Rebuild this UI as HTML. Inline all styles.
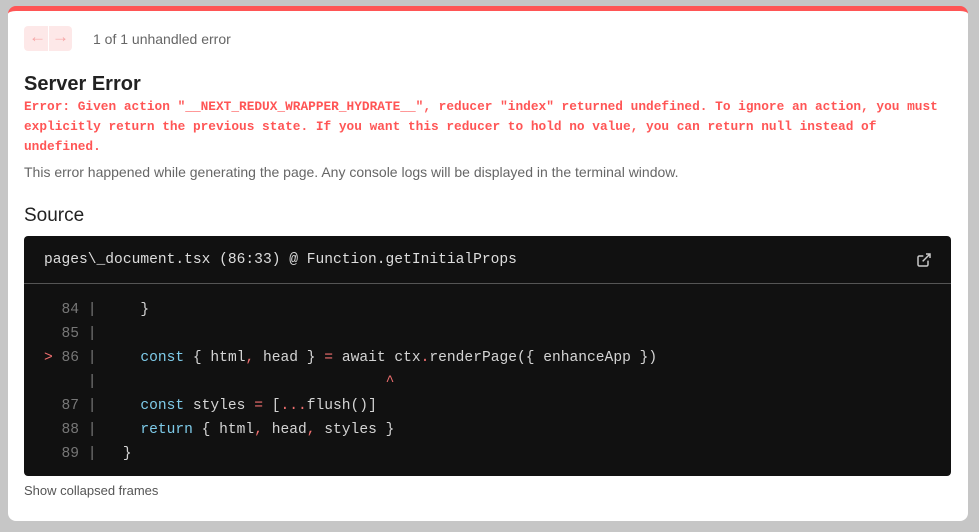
<!DOCTYPE html>
<html><head><style>
*{margin:0;padding:0;box-sizing:border-box}
body{width:979px;height:532px;background:#c6c6c6;position:relative;overflow:hidden;font-family:"Liberation Sans",sans-serif}
.d{position:absolute;left:8px;top:6px;width:960px;height:515px;background:#fff;border-radius:8px;border-top:5px solid #ff5555;overflow:hidden}
.a{position:absolute}
.mono{font-family:"Liberation Mono",monospace}
.nav{left:16px;top:15px;width:48px;height:25px;background:#fde8e8;border-radius:4px}
.nav span{position:absolute;top:1px;color:#f7a6a6;font-size:17px}
.code{left:16px;top:225px;width:927px;height:240px;background:#111;border-radius:4px;color:#ddd}
pre{font-family:"Liberation Mono",monospace;font-size:14.6px;line-height:24px;position:absolute;left:20px;top:62px;color:#d4d4d4}
.g{color:#777}.b{color:#7ecbe9}.r{color:#f06f6f}
</style></head><body>
<div class="d">
<div class="a nav"><span style="left:5px">&#8592;</span><span style="left:28px">&#8594;</span><div style="position:absolute;left:24px;top:0;width:1px;height:25px;background:#fff"></div></div>
<div class="a" style="left:85px;top:20px;font-size:14px;color:#666">1 of 1 unhandled error</div>
<div class="a" style="left:16px;top:62px;font-size:20px;font-weight:bold;color:#222">Server Error</div>
<div class="a mono" style="left:16px;top:86px;width:930px;font-size:12.8px;line-height:20px;font-weight:bold;color:#ff5555">Error: Given action "__NEXT_REDUX_WRAPPER_HYDRATE__", reducer "index" returned undefined. To ignore an action, you must explicitly return the previous state. If you want this reducer to hold no value, you can return null instead of undefined.</div>
<div class="a" style="left:16px;top:153px;font-size:14px;color:#666">This error happened while generating the page. Any console logs will be displayed in the terminal window.</div>
<div class="a" style="left:16px;top:194px;font-size:19px;color:#222">Source</div>
<div class="a code">
<div class="a mono" style="left:20px;top:16px;font-size:14.6px;color:#ddd">pages\_document.tsx (86:33) @ Function.getInitialProps</div>
<svg class="a" style="left:892px;top:16px" width="16" height="16" viewBox="0 0 24 24" fill="none" stroke="#ccc" stroke-width="2.2"><path d="M18 13v6a2 2 0 0 1-2 2H5a2 2 0 0 1-2-2V8a2 2 0 0 1 2-2h6"/><path d="M15 3h6v6"/><path d="M10 14L21 3"/></svg>
<div class="a" style="left:0;top:47px;width:927px;height:1px;background:#555"></div>
<pre><span class="g">  84 |</span>     }
<span class="g">  85 |</span>
<span class="r">&gt;</span><span class="g"> 86 |</span>     <span class="b">const</span> { html<span class="r">,</span> head } <span class="r">=</span> await ctx<span class="r">.</span>renderPage({ enhanceApp })
<span class="g">     |</span>                                 <span class="r">^</span>
<span class="g">  87 |</span>     <span class="b">const</span> styles <span class="r">=</span> [<span class="r">...</span>flush()]
<span class="g">  88 |</span>     <span class="b">return</span> { html<span class="r">,</span> head<span class="r">,</span> styles }
<span class="g">  89 |</span>   }</pre>
</div>
<div class="a" style="left:16px;top:472px;font-size:13px;color:#555">Show collapsed frames</div>
</div>
</body></html>
